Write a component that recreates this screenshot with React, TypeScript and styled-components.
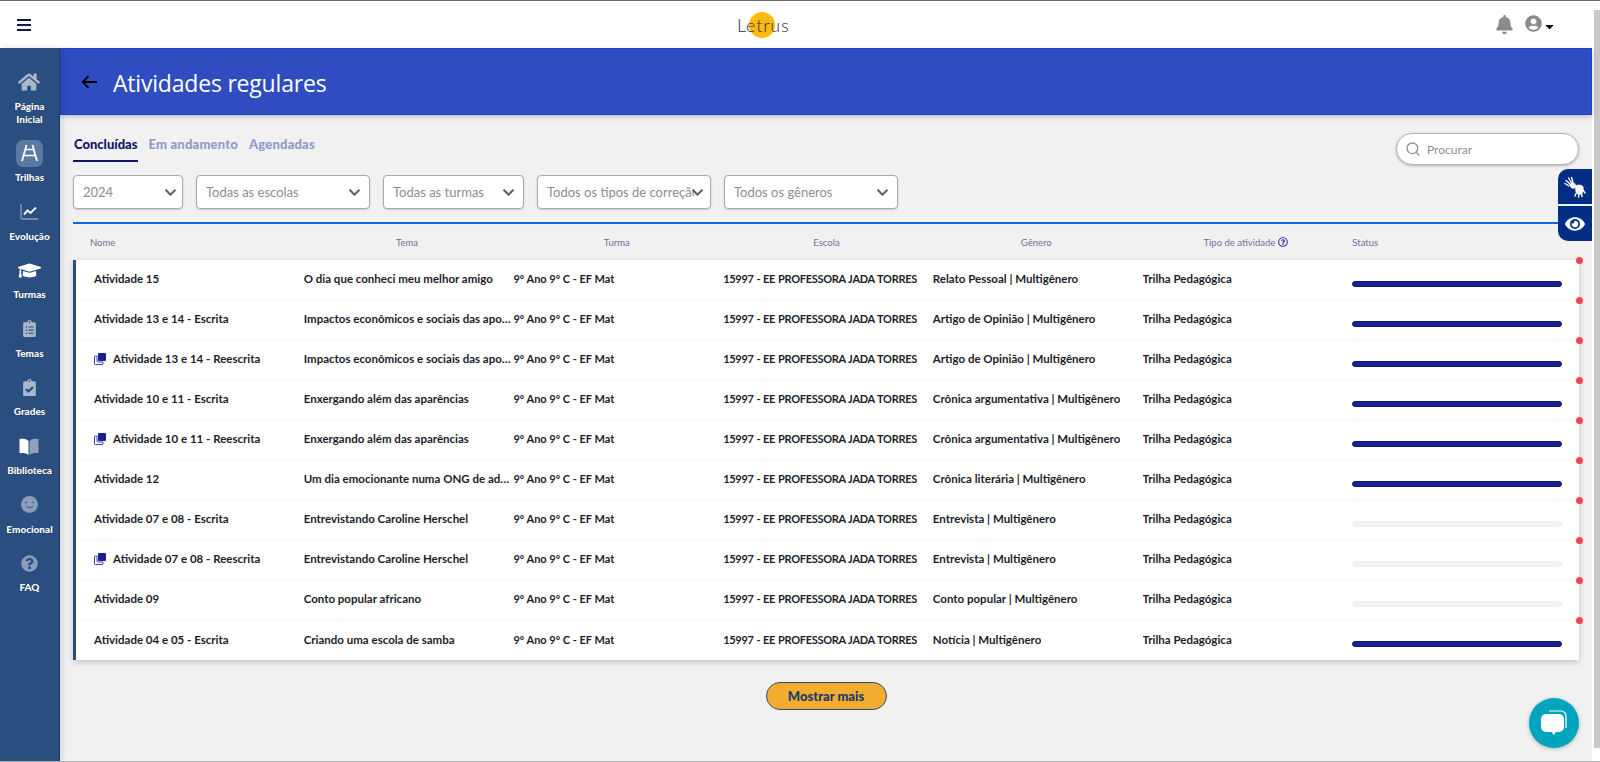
import React from 'react';
import styled, { createGlobalStyle } from 'styled-components';
import {
	FaHome,
	FaGraduationCap,
	FaClipboardList,
	FaClipboardCheck,
	FaQuestionCircle,
	FaBell,
	FaUserCircle,
	FaCaretDown,
	FaEye,
	FaChevronDown,
	FaRegQuestionCircle,
} from 'react-icons/fa';
import { FiSearch } from 'react-icons/fi';

const GlobalStyle = createGlobalStyle`
	html, body {
		margin: 0;
		height: 100%;
		overflow: hidden;
		background: #fff;
		font-family: Lato, "Open Sans", sans-serif;
	}
	* { box-sizing: border-box; }
`;

const Shell = styled.div`
	display: flex;
	height: 100vh;
	border-top: 1px solid #6b6b6b;
	border-bottom: 1px solid #b8b8b8;
`;

const Page = styled.div`
	flex: 1;
	min-width: 0;
	display: flex;
	flex-direction: column;
`;

const ScrollRail = styled.div`
	width: 6px;
	display: flex;
	flex-direction: column;
	padding: 9px 0 13px;
	background: #fff;
`;

const ScrollThumb = styled.div`
	flex: 1;
	background: #c8c8c8;
`;

const TopBar = styled.header`
	height: 47px;
	flex-shrink: 0;
	display: flex;
	align-items: center;
	padding: 0 38px 0 17px;
	background: #fff;
`;

const Burger = styled.div`
	width: 14px;
	height: 12px;
	border-top: 2px solid #14144f;
	border-bottom: 2px solid #14144f;
	display: flex;
	align-items: center;

	&::before {
		content: '';
		width: 100%;
		height: 2px;
		background: #14144f;
	}
`;

const Logo = styled.div`
	position: relative;
	margin: 0 auto 0 706px;
	font-size: 18px;
	font-weight: 300;
	letter-spacing: 0.8px;
	color: #2e2e42;
	z-index: 0;

	&::before {
		content: '';
		position: absolute;
		z-index: -1;
		left: 12px;
		top: -2px;
		width: 26px;
		height: 26px;
		border-radius: 50%;
		background: #ffb90f;
	}
`;

const UserTools = styled.div`
	display: flex;
	align-items: center;
	gap: 11px;
	color: #8a8a90;
`;

const UserMenu = styled.div`
	display: flex;
	align-items: center;
	gap: 1px;
	margin-top: -3px;

	svg:last-child {
		color: #000;
		margin-top: 6px;
	}
`;

const Main = styled.div`
	flex: 1;
	min-height: 0;
	display: flex;
`;

const Sidebar = styled.nav`
	position: relative;
	z-index: 1;
	width: 60px;
	flex-shrink: 0;
	display: flex;
	flex-direction: column;
	align-items: center;
	gap: 14.1px;
	padding-top: 20px;
	background: #2a4e7f;
	border-right: 1px solid #1d3d6d;
	box-shadow: 2px 0 6px rgba(0, 0, 0, 0.12);
`;

const NavItem = styled.div`
	display: flex;
	flex-direction: column;
	align-items: center;
	color: #fff;
	font-size: 10px;
	font-weight: 900;
	line-height: 13px;
	text-align: center;
	text-shadow: 0 0 1px rgba(0, 0, 0, 0.5);
`;

const NavIcon = styled.div<{ $active?: boolean }>`
	width: 27px;
	height: 27px;
	margin-bottom: 4.5px;
	display: flex;
	align-items: center;
	justify-content: center;
	border-radius: 7px;
	color: #aab7cb;
	background: ${(p) => (p.$active ? '#5a7aa3' : 'transparent')};
`;

const Content = styled.main`
	flex: 1;
	min-width: 0;
	position: relative;
	display: flex;
	flex-direction: column;
	background: #f1f1f1;
	margin-right: 2px;
`;

const TitleBar = styled.div`
	height: 67px;
	flex-shrink: 0;
	display: flex;
	align-items: center;
	gap: 16px;
	padding-left: 21px;
	background: #2f4cc0;
	border: 1px solid #1443d4;
	border-left: 0;
	color: #fff;
	box-shadow: 0 2px 5px rgba(0, 0, 0, 0.2);
`;

const Title = styled.h1`
	margin: 2px 0 0;
	font-size: 23px;
	font-weight: 400;
	font-family: 'Open Sans', sans-serif;
	letter-spacing: -0.2px;
`;

const Body = styled.div`
	flex: 1;
	display: flex;
	flex-direction: column;
	padding: 18px 13px 0;
`;

const TabRow = styled.div`
	height: 32px;
	display: flex;
	align-items: flex-end;
	justify-content: space-between;
`;

const Tabs = styled.div`
	display: flex;
	gap: 9px;
	margin-bottom: 3px;
`;

const Tab = styled.div<{ $active?: boolean }>`
	padding: 0 1px 8px;
	font-size: 13px;
	font-weight: 900;
	letter-spacing: ${(p) => (p.$active ? '0' : '0.2px')};
	color: ${(p) => (p.$active ? '#10156b' : '#8e9bcb')};
	border-bottom: 2px solid ${(p) => (p.$active ? '#10156b' : 'transparent')};
`;

const Search = styled.div`
	width: 183px;
	height: 32px;
	display: flex;
	align-items: center;
	gap: 6px;
	padding-left: 8px;
	background: #fff;
	border: 1px solid #b4b4b4;
	border-radius: 16px;
	box-shadow: 0 1px 3px rgba(0, 0, 0, 0.25);
	font-size: 12px;
	color: #8f8f8f;
`;

const Filters = styled.div`
	display: flex;
	gap: 13px;
	margin-top: 10px;
`;

const Select = styled.div<{ $width: number; $chevron: number }>`
	position: relative;
	width: ${(p) => p.$width}px;
	height: 34px;
	display: flex;
	align-items: center;
	padding: 0 16px 0 9px;
	background: #fff;
	border: 1px solid #a9a9a9;
	border-radius: 4px;
	box-shadow: 0 1px 2px rgba(0, 0, 0, 0.15);
	font-size: 13px;
	color: #8d8d8d;

	svg {
		position: absolute;
		right: ${(p) => p.$chevron}px;
		top: 10px;
		color: #5f5f5f;
	}
`;

const SelectLabel = styled.span`
	overflow: hidden;
	white-space: nowrap;
`;

const Rule = styled.div`
	width: 1485px;
	height: 2px;
	margin-top: 13px;
	background: #0d66dd;
`;

const Grid = styled.div`
	display: grid;
	grid-template-columns: repeat(7, minmax(0, 1fr));
	padding: 0 17px 0 18px;
	align-items: center;
`;

const HeadRow = styled(Grid)`
	height: 36px;
	margin-left: 3px;
`;

const HeadCell = styled.div`
	display: flex;
	align-items: center;
	justify-content: center;
	gap: 3px;
	padding-right: 3px;
	font-size: 9.5px;
	color: #6f6f9a;
`;

const HeadName = styled(HeadCell)`
	justify-content: flex-start;
	margin-left: -4px;
`;

const HeadStatus = styled(HeadCell)`
	justify-content: flex-start;
`;

const Card = styled.div`
	background: #fff;
	border-left: 3px solid #2a4e7f;
	box-shadow: 0 2px 6px rgba(0, 0, 0, 0.2);
`;

const Row = styled(Grid)`
	position: relative;
	height: 40px;
	border-bottom: 1px solid #f8f8f8;

	&:last-child {
		border-bottom: 0;
	}

	&::after {
		content: '';
		position: absolute;
		right: -4px;
		top: -3px;
		width: 7px;
		height: 7px;
		border-radius: 50%;
		background: #f4434f;
	}
`;

const Cell = styled.div`
	display: flex;
	align-items: center;
	gap: 7px;
	margin-top: -2px;
	font-size: 11.5px;
	font-weight: 700;
	color: #1c1c2a;
`;

const CellText = styled.span`
	overflow: hidden;
	white-space: nowrap;
	text-overflow: ellipsis;
`;

const ClassText = styled(CellText)`
	font-size: 11px;
`;

const SchoolText = styled(CellText)`
	font-size: 11px;
	letter-spacing: -0.3px;
	word-spacing: 0.5px;
`;

const Bar = styled.div<{ $done: boolean }>`
	height: 6px;
	margin-top: 8px;
	border-radius: 3px;
	background: ${(p) => (p.$done ? '#1c2190' : '#f1f1f1')};
	border: 1px solid ${(p) => (p.$done ? '#12196f' : '#f1f1f1')};
`;

const MoreWrap = styled.div`
	display: flex;
	justify-content: center;
	margin-top: 22px;
`;

const MoreButton = styled.button`
	width: 121px;
	height: 28px;
	border: 1px solid #2a4e7f;
	border-radius: 14px;
	background: #f2ac2e;
	color: #1d3a6d;
	font: 900 13px Lato, sans-serif;
`;

const SideTool = styled.div<{ $top: number; $corner: string }>`
	position: absolute;
	top: ${(p) => p.$top}px;
	right: 0;
	width: 34px;
	height: 35px;
	display: flex;
	align-items: center;
	justify-content: center;
	background: #012d85;
	color: #fff;
	border-radius: ${(p) => p.$corner};
`;

const ChatButton = styled.div`
	position: absolute;
	right: 13px;
	bottom: 13px;
	width: 50px;
	height: 50px;
	display: flex;
	align-items: center;
	justify-content: center;
	border-radius: 50%;
	background: #00a4bd;
	box-shadow: 0 1px 4px rgba(0, 0, 0, 0.25);
`;

const TrackIcon = () => (
	<svg width='19' height='18' viewBox='0 0 19 18' fill='none' stroke='#fff' strokeWidth='1.8'>
		<path d='M6.5 1 2 17M12.5 1 17 17' />
		<path d='M5 5.5h9M3.5 11.5h12' strokeWidth='1.5' />
	</svg>
);

const ChartIcon = () => (
	<svg width='18' height='16' viewBox='0 0 18 16' fill='none'>
		<path d='M1 0v13a2 2 0 0 0 2 2h15' stroke='#8ea0bb' strokeWidth='1.3' />
		<path d='m4 10.5 3.5-4 3 2.5L16 3.5' stroke='#eef1f6' strokeWidth='2' />
	</svg>
);

const BookIcon = () => (
	<svg width='20' height='17' viewBox='0 0 20 17'>
		<path d='M9.5 3C7.5 1 4 .6.5 1v14c3.5-.3 7 0 9 2z' fill='#fff' />
		<path d='M10.5 3c2-2 5.5-2.4 9-2v14c-3.5-.3-7 0-9 2z' fill='#8ea0bb' />
	</svg>
);

const HandsIcon = () => (
	<svg width='22' height='22' viewBox='0 0 22 22' fill='none' stroke='#fff' strokeLinecap='round'>
		<path d='M2 4.5 6 8M4.5 2 7.5 7M7.5 1.5 9 6.5M1 7.5 5 10' strokeWidth='1.4' />
		<path d='M6 8.5c1-1.8 3.5-2 5-.8l1 2.800-2.500 2C7.500 12.500 6 11 6 8.500z' fill='#fff' strokeWidth='0.6' />
		<path d='M11 10c2.500-1.500 6-1.500 8 .5.800 2.500 0 5.500-1.500 7.500-2 1-4.500 0-5.500-2z' fill='#fff' strokeWidth='0.6' />
		<path d='M12.500 16.500 11 20M15 17.500 14.500 21M17.500 17 18 20.500M19 14 21 17' strokeWidth='1.4' />
	</svg>
);

const SmileIcon = () => (
	<svg width='17' height='17' viewBox='0 0 17 17'>
		<circle cx='8.5' cy='8.5' r='8.5' fill='#8b9db8' />
		<path d='M4 7q1-2 2.4 0M10.6 7q1-2 2.4 0M5 10.5q3.5 3 7 0' fill='none' stroke='#2a4e7f' strokeWidth='0.9' />
	</svg>
);

const CopyIcon = () => (
	<svg width='12' height='12' viewBox='0 0 12 12'>
		<rect x='4' y='0' width='8' height='8' rx='1' fill='#1c2190' />
		<path d='M3 3H1.5A1 1 0 0 0 .5 4v6.5a1 1 0 0 0 1 1H8a1 1 0 0 0 1-1V9H4a1 1 0 0 1-1-1z' fill='#fff' stroke='#3a3fa8' />
	</svg>
);

const ArrowBack = () => (
	<svg width='16' height='14' viewBox='0 0 16 14' fill='none' stroke='#000' strokeWidth='1.8'>
		<path d='M16 7H2M7.5 1.2 1.7 7l5.8 5.8' />
	</svg>
);

const ChatIcon = () => (
	<svg width='28' height='26' viewBox='0 0 28 26'>
		<path d='M9 1h12a5 5 0 0 1 5 5v12' fill='none' stroke='#fff' strokeWidth='1.2' />
		<path d='M6 4h13a5 5 0 0 1 5 5v8a5 5 0 0 1-5 5h-3l-2.2 3-2.2-3H6a5 5 0 0 1-5-5V9a5 5 0 0 1 5-5z' fill='#fff' />
	</svg>
);

const navItems = [
	{ label: 'Página Inicial', icon: <FaHome size={22} /> },
	{ label: 'Trilhas', icon: <TrackIcon />, active: true },
	{ label: 'Evolução', icon: <ChartIcon /> },
	{ label: 'Turmas', icon: <FaGraduationCap size={23} color='#fff' /> },
	{ label: 'Temas', icon: <FaClipboardList size={17} /> },
	{ label: 'Grades', icon: <FaClipboardCheck size={17} /> },
	{ label: 'Biblioteca', icon: <BookIcon /> },
	{ label: 'Emocional', icon: <SmileIcon /> },
	{ label: 'FAQ', icon: <FaQuestionCircle size={17} color='#8b9db8' /> },
];

const filters = [
	{ label: '2024', width: 110, chevron: 5 },
	{ label: 'Todas as escolas', width: 174, chevron: 8 },
	{ label: 'Todas as turmas', width: 141, chevron: 8 },
	{ label: 'Todos os tipos de correção', width: 174, chevron: 6 },
	{ label: 'Todos os gêneros', width: 174, chevron: 8 },
];

const impactos = 'Impactos econômicos e sociais das apostas online';
const enxergando = 'Enxergando além das aparências';
const entrevistando = 'Entrevistando Caroline Herschel';
const argumentativa = 'Crônica argumentativa | Multigênero';

const rows = [
	{ name: 'Atividade 15', theme: 'O dia que conheci meu melhor amigo', genre: 'Relato Pessoal | Multigênero', done: true },
	{ name: 'Atividade 13 e 14 - Escrita', theme: impactos, genre: 'Artigo de Opinião | Multigênero', done: true },
	{ name: 'Atividade 13 e 14 - Reescrita', theme: impactos, genre: 'Artigo de Opinião | Multigênero', done: true, rewrite: true },
	{ name: 'Atividade 10 e 11 - Escrita', theme: enxergando, genre: argumentativa, done: true },
	{ name: 'Atividade 10 e 11 - Reescrita', theme: enxergando, genre: argumentativa, done: true, rewrite: true },
	{ name: 'Atividade 12', theme: 'Um dia emocionante numa ONG de adoção', genre: 'Crônica literária | Multigênero', done: true },
	{ name: 'Atividade 07 e 08 - Escrita', theme: entrevistando, genre: 'Entrevista | Multigênero', done: false },
	{ name: 'Atividade 07 e 08 - Reescrita', theme: entrevistando, genre: 'Entrevista | Multigênero', done: false, rewrite: true },
	{ name: 'Atividade 09', theme: 'Conto popular africano', genre: 'Conto popular | Multigênero', done: false },
	{ name: 'Atividade 04 e 05 - Escrita', theme: 'Criando uma escola de samba', genre: 'Notícia | Multigênero', done: true },
];

const App: React.FC = () => (
	<Shell>
		<GlobalStyle />
		<Page>
			<TopBar>
				<Burger />
				<Logo>Letrus</Logo>
				<UserTools>
					<FaBell size={19} />
					<UserMenu>
						<FaUserCircle size={17} />
						<FaCaretDown size={13} />
					</UserMenu>
				</UserTools>
			</TopBar>
			<Main>
				<Sidebar>
					{navItems.map((item) => (
						<NavItem key={item.label}>
							<NavIcon $active={item.active}>{item.icon}</NavIcon>
							{item.label === 'Página Inicial' ? (
								<span>
									Página
									<br />
									Inicial
								</span>
							) : (
								item.label
							)}
						</NavItem>
					))}
				</Sidebar>
				<Content>
					<TitleBar>
						<ArrowBack />
						<Title>Atividades regulares</Title>
					</TitleBar>
					<Body>
						<TabRow>
							<Tabs>
								<Tab $active>Concluídas</Tab>
								<Tab>Em andamento</Tab>
								<Tab>Agendadas</Tab>
							</Tabs>
							<Search>
								<FiSearch size={16} />
								Procurar
							</Search>
						</TabRow>
						<Filters>
							{filters.map((f) => (
								<Select key={f.label} $width={f.width} $chevron={f.chevron}>
									<SelectLabel>{f.label}</SelectLabel>
									<FaChevronDown size={13} />
								</Select>
							))}
						</Filters>
						<Rule />
						<HeadRow>
							<HeadName>Nome</HeadName>
							<HeadCell>Tema</HeadCell>
							<HeadCell>Turma</HeadCell>
							<HeadCell>Escola</HeadCell>
							<HeadCell>Gênero</HeadCell>
							<HeadCell>
								Tipo de atividade <FaRegQuestionCircle size={10} color='#2a2f9a' />
							</HeadCell>
							<HeadStatus>Status</HeadStatus>
						</HeadRow>
						<Card>
							{rows.map((r) => (
								<Row key={r.name}>
									<Cell>
										{r.rewrite && <CopyIcon />}
										<CellText>{r.name}</CellText>
									</Cell>
									<Cell>
										<CellText>{r.theme}</CellText>
									</Cell>
									<Cell>
										<ClassText>9º Ano 9º C - EF Mat</ClassText>
									</Cell>
									<Cell>
										<SchoolText>15997 - EE PROFESSORA JADA TORRES</SchoolText>
									</Cell>
									<Cell>
										<CellText>{r.genre}</CellText>
									</Cell>
									<Cell>
										<CellText>Trilha Pedagógica</CellText>
									</Cell>
									<Bar $done={r.done} />
								</Row>
							))}
						</Card>
						<MoreWrap>
							<MoreButton>Mostrar mais</MoreButton>
						</MoreWrap>
					</Body>
					<SideTool $top={121} $corner='10px 0 0 0'>
						<HandsIcon />
					</SideTool>
					<SideTool $top={158} $corner='0 0 0 10px'>
						<FaEye size={20} />
					</SideTool>
					<ChatButton>
						<ChatIcon />
					</ChatButton>
				</Content>
			</Main>
		</Page>
		<ScrollRail>
			<ScrollThumb />
		</ScrollRail>
	</Shell>
);

export default App;
